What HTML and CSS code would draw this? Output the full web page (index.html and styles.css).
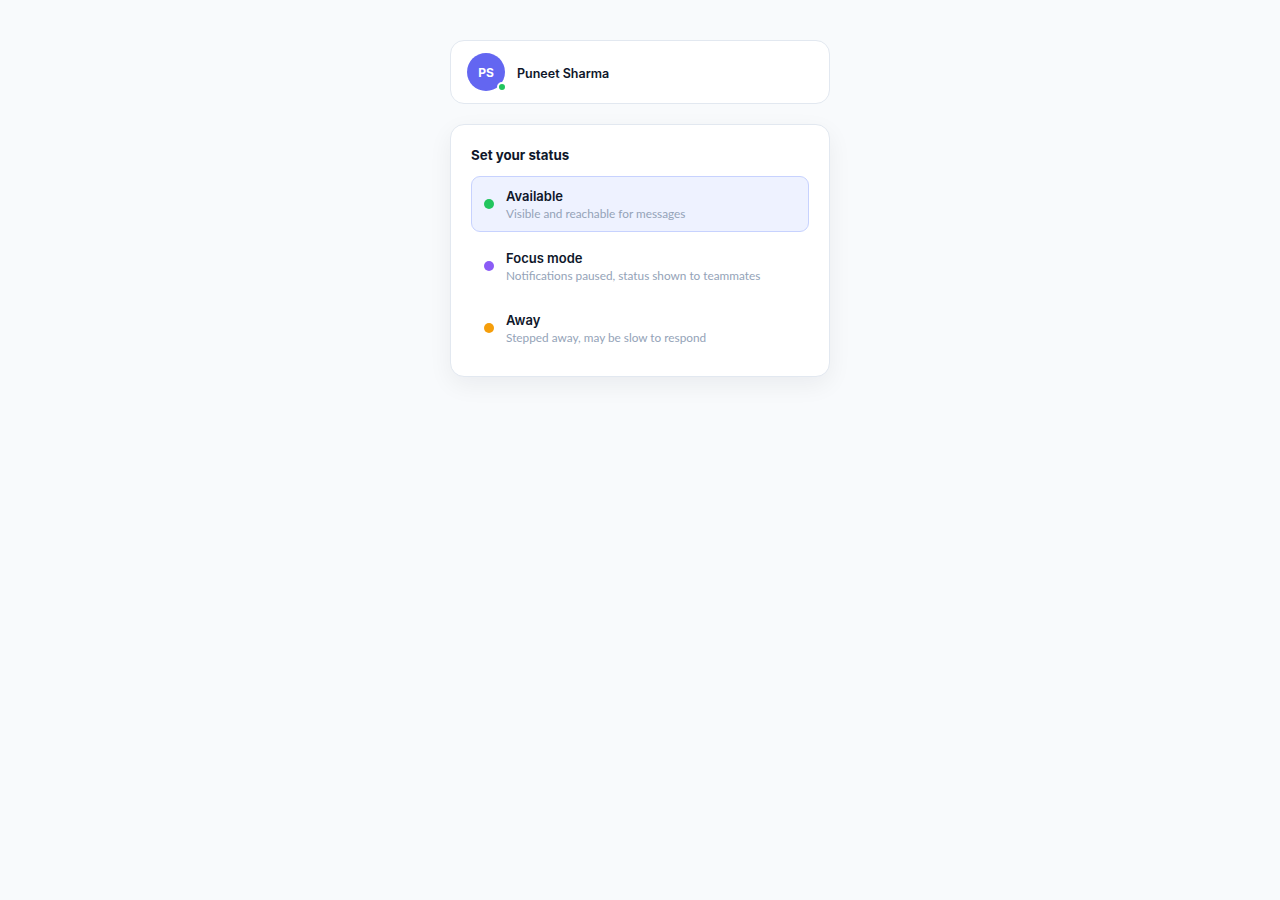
FILE: index.html
```html
<!DOCTYPE html>
<html lang="en">
<head>
<meta charset="utf-8">
<title>Status</title>
<link rel="stylesheet" href="styles.css">
</head>
<body>
<main class="wrap">
  <section class="card profile">
    <div class="avatar">PS<span class="presence"></span></div>
    <div class="name">Puneet Sharma</div>
  </section>
  <section class="card status">
    <h2 class="title">Set your status</h2>
    <div class="options">
      <div class="option selected">
        <span class="dot green"></span>
        <div class="text">
          <div class="label">Available</div>
          <div class="desc">Visible and reachable for messages</div>
        </div>
      </div>
      <div class="option">
        <span class="dot purple"></span>
        <div class="text">
          <div class="label">Focus mode</div>
          <div class="desc">Notifications paused, status shown to teammates</div>
        </div>
      </div>
      <div class="option">
        <span class="dot amber"></span>
        <div class="text">
          <div class="label">Away</div>
          <div class="desc">Stepped away, may be slow to respond</div>
        </div>
      </div>
    </div>
  </section>
</main>
</body>
</html>
```
FILE: styles.css
```css
* { box-sizing: border-box; }
html, body { margin: 0; padding: 0; }
body {
  background: #f8fafc;
  font-family: Inter, "Noto Sans", sans-serif;
  color: #0f172a;
  width: 1280px;
  height: 900px;
}
.wrap {
  width: 380px;
  margin: 40px auto 0;
  display: flex;
  flex-direction: column;
  gap: 20px;
}
.card {
  background: #ffffff;
  border: 1px solid #e2e8f0;
  border-radius: 14px;
}
.profile {
  display: flex;
  align-items: center;
  gap: 12px;
  padding: 12px 16px;
}
.avatar {
  position: relative;
  width: 38px;
  height: 38px;
  border-radius: 50%;
  background: #6366f1;
  color: #fff;
  font-size: 12px;
  font-weight: 700;
  display: flex;
  align-items: center;
  justify-content: center;
}
.presence {
  position: absolute;
  right: -2px;
  bottom: -1px;
  width: 10px;
  height: 10px;
  border-radius: 50%;
  background: #22c55e;
  border: 2px solid #fff;
}
.name {
  margin-top: 2px;
  font-size: 12.5px;
  font-weight: 600;
}
.status {
  padding: 20px;
  box-shadow: 0 8px 24px rgba(15, 23, 42, 0.06);
}
.title {
  margin: 0 0 11px;
  font-size: 13.3px;
  line-height: 20px;
  font-weight: 700;
}
.options {
  display: flex;
  flex-direction: column;
  gap: 6px;
}
.option {
  display: flex;
  align-items: center;
  gap: 12px;
  padding: 10px 12px 8px;
  border: 1px solid transparent;
  border-radius: 9px;
}
.option.selected {
  background: #eef2ff;
  border-color: #c7d2fe;
}
.dot {
  width: 10px;
  height: 10px;
  margin-bottom: 2px;
  border-radius: 50%;
  flex: none;
}
.green { background: #22c55e; }
.purple { background: #8b5cf6; }
.amber { background: #f59e0b; }
.label {
  font-size: 13px;
  line-height: 18px;
  font-weight: 600;
  color: #0f172a;
}
.desc {
  font-family: Lato, "Noto Sans", sans-serif;
  font-size: 11.8px;
  line-height: 18px;
  color: #94a3b8;
}
```
